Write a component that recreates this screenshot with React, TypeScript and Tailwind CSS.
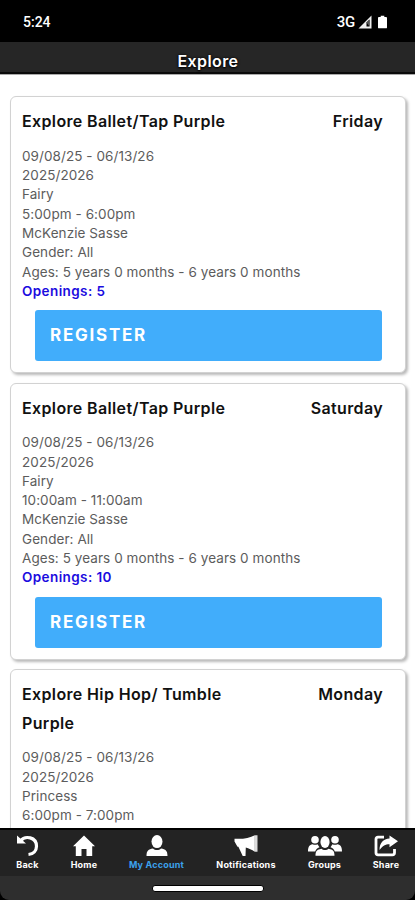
import type { ReactNode } from "react";

type ClassInfo = {
  title: string;
  day: string;
  details: string[];
  openings: number;
};

const ages = "Ages: 5 years 0 months - 6 years 0 months";

const classes: ClassInfo[] = [
  {
    title: "Explore Ballet/Tap Purple",
    day: "Friday",
    details: ["09/08/25 - 06/13/26", "2025/2026", "Fairy", "5:00pm - 6:00pm", "McKenzie Sasse", "Gender: All", ages],
    openings: 5,
  },
  {
    title: "Explore Ballet/Tap Purple",
    day: "Saturday",
    details: ["09/08/25 - 06/13/26", "2025/2026", "Fairy", "10:00am - 11:00am", "McKenzie Sasse", "Gender: All", ages],
    openings: 10,
  },
  {
    title: "Explore Hip Hop/ Tumble Purple",
    day: "Monday",
    details: ["09/08/25 - 06/13/26", "2025/2026", "Princess", "6:00pm - 7:00pm"],
    openings: 0,
  },
];

function ClassCard({ item }: { item: ClassInfo }) {
  return (
    <article className="shrink-0 rounded-md border border-[#d2d2d2] bg-white pt-[10px] pr-[22px] pb-[11px] pl-[11px] shadow-[2px_2px_3px_rgba(0,0,0,0.28)]">
      <div className="flex items-start justify-between text-[16px] leading-[28.5px] font-semibold tracking-[0.36px] text-[#111]">
        <h2 className="w-[215px]">{item.title}</h2>
        <span>{item.day}</span>
      </div>
      <div className="mt-[11px] text-[13.5px] leading-[19.3px] tracking-[0.07px] text-[#5c5c5c]">
        {item.details.map((line) => (
          <p key={line}>{line}</p>
        ))}
        {item.openings > 0 && <p className="font-semibold tracking-[0.4px] text-[#1b0be0]">Openings: {item.openings}</p>}
      </div>
      {item.openings > 0 && (
        <button className="mt-[9px] ml-[13px] block h-[51px] w-[347px] rounded-[3px] bg-[#41adfb] pt-px pl-[15px] text-left text-[17px] font-bold tracking-[1.75px] text-white">
          REGISTER
        </button>
      )}
    </article>
  );
}

function NavItem({ label, active, width, children }: { label: string; active?: boolean; width: string; children: ReactNode }) {
  return (
    <div className={`flex flex-col items-center ${width} ${active ? "text-[#3ca1ec]" : "text-white"}`}>
      <svg viewBox="0 0 34 24" className="h-6 w-[34px] text-white" fill="currentColor">
        {children}
      </svg>
      <span className="mt-[0.5px] text-[9px] leading-[11px] font-bold tracking-[0.2px] whitespace-nowrap">{label}</span>
    </div>
  );
}

export default function App() {
  return (
    <div className="flex h-[900px] w-[415px] flex-col overflow-hidden bg-black font-['Inter',sans-serif]">
      <div className="flex h-[42px] shrink-0 items-center justify-between bg-black pr-[28px] pl-[23px] font-['Roboto',sans-serif] text-[14px] font-medium text-white">
        <span className="pt-[2px]">5:24</span>
        <div className="flex items-center pt-[2px]">
          <span className="text-[15px] tracking-[-0.3px]">3G</span>
          <svg viewBox="0 0 14 14" className="ml-[3px] h-[14px] w-[14px]">
            <path d="M13.500.5v13H.5z" fill="#eee" />
            <path d="M11.500 4.500v7h-3V7.500z" fill="#000" />
            <path d="M8.500 7.500l3-3v7z" fill="#555" />
          </svg>
          <svg viewBox="0 0 10 14" className="ml-[6px] h-[14px] w-[9px]" fill="#fff">
            <path d="M3 0h4v1.500h2q1 0 1 1V13q0 1-1 1H1q-1 0-1-1V2.500q0-1 1-1h2z" />
          </svg>
        </div>
      </div>
      <header className="flex h-[32px] shrink-0 items-center justify-center border-b-2 border-[#0a0a0a] bg-[#262626] pt-[8px] text-[16px] font-semibold tracking-[0.4px] text-white [text-shadow:0_0_3px_#000,0_1px_2px_#000]">
        <span className="pl-px">Explore</span>
      </header>
      <main className="flex h-[754px] shrink-0 flex-col gap-[9.6px] overflow-hidden border-t border-[#aaa] bg-white pt-[21.3px] pr-[9px] pl-[10px]">
        {classes.map((item) => (
          <ClassCard key={item.day} item={item} />
        ))}
      </main>
      <div className="flex h-[72px] shrink-0 flex-col overflow-hidden rounded-b-[9px] border-t-2 border-black bg-[#2e2e2e]">
        <nav className="flex h-[46px] shrink-0 bg-[#232323] pt-[4px]">
          <NavItem label="Back" width="w-[55px]">
            <path d="M9.500 7C14 1 25.500 3 25.500 12.300c0 4.500-3 7.700-8 8.200" fill="none" stroke="currentColor" strokeWidth="3.200" />
            <path d="M6 1.500l2.500 2.300 6.500 5.700H6z" />
          </NavItem>
          <NavItem label="Home" width="w-[58px]">
            <path d="M17 1.500l11 10.700h-2.800V22h-5.700v-7h-5v7H8.800v-9.800H6z" />
          </NavItem>
          <NavItem label="My Account" width="w-[87px]" active>
            <ellipse cx="17" cy="7.600" rx="5.500" ry="6.500" />
            <path d="M6.500 22c0-5.500 2-6.700 6.500-7.500 2 2 6 2 8 0 4.500.8 6.500 2 6.500 7.500z" />
          </NavItem>
          <NavItem label="Notifications" width="w-[92px]">
            <path d="M25.800 1.200h2.700v16.500h-2.700z" fill="#ddd" />
            <path d="M5.500 4.800h4c6 0 12-1.100 16.300-3.600v16.500c-3-1.900-6-3.500-9-4.200l-.3 8.500h-2.800l-4.300-9.200H8.500L5.500 7.500z" />
          </NavItem>
          <NavItem label="Groups" width="w-[65px]">
            <circle cx="7" cy="5.800" r="3.800" />
            <circle cx="27" cy="5.800" r="3.800" />
            <path d="M0 17.500c0-5 1.500-6.500 4.500-7.300q2.700 1.300 5 0l2 3c-2.500 1-3.700 2.300-4.300 4.300zM34 17.500c0-5-1.500-6.500-4.500-7.300q-2.700 1.300-5 0l-2 3c2.500 1 3.700 2.300 4.300 4.300z" />
            <ellipse cx="17" cy="8" rx="4.600" ry="6" />
            <path d="M7.500 21.700c0-5 1.700-6 5.800-7 2 1.700 5.400 1.700 7.400 0 4.100 1 5.800 2 5.800 7z" />
          </NavItem>
          <NavItem label="Share" width="w-[58px]">
            <path d="M15 3.200H9q-2 0-2 2v13.600q0 2 2 2h14.500q2 0 2-2V15" fill="none" stroke="currentColor" strokeWidth="2.800" />
            <path d="M20.500 1.500L29 7.300l-8.500 6V10.200c-4.500 0-6.500 1.500-10 5.800 0-7 3.700-11 10-11.500z" />
          </NavItem>
        </nav>
        <div className="flex h-6 justify-center pt-[9px]">
          <div className="h-[7px] w-[112px] rounded-[3px] border border-black bg-white" />
        </div>
      </div>
    </div>
  );
}
